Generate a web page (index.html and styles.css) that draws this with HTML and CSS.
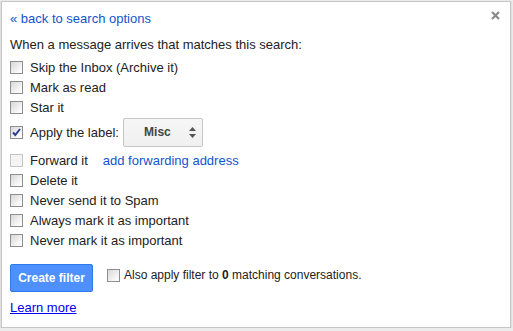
FILE: index.html
```html
<!DOCTYPE html>
<html>
<head>
<meta charset="utf-8">
<link rel="stylesheet" href="styles.css">
</head>
<body>
<div class="panel">
  <div class="head">
    <a class="back" href="#">« back to search options</a>
    <span class="close"><svg width="9" height="9" viewBox="0 0 9 9"><path d="M1 1L8 8M8 1L1 8" stroke="#8a8a8a" stroke-width="2.2" fill="none"/></svg></span>
  </div>
  <div class="intro">When a message arrives that matches this search:</div>
  <div class="opts">
    <label class="row"><span class="cb"></span>Skip the Inbox (Archive it)</label>
    <label class="row"><span class="cb"></span>Mark as read</label>
    <label class="row"><span class="cb"></span>Star it</label>
    <label class="row row-label"><span class="cb checked"><svg width="11" height="11" viewBox="0 0 11 11"><path d="M2 5.5L4.3 8L9 2" stroke="#2a3f8f" stroke-width="2" fill="none"/></svg></span>Apply the label:
      <span class="select"><span class="sel-text">Misc</span><span class="arrows"><svg width="7" height="11" viewBox="0 0 7 11"><path d="M3.5 0L7 4H0Z M3.5 11L7 7H0Z" fill="#555"/></svg></span></span>
    </label>
    <label class="row"><span class="cb disabled"></span>Forward it<a class="fwd" href="#">add forwarding address</a></label>
    <label class="row"><span class="cb"></span>Delete it</label>
    <label class="row"><span class="cb"></span>Never send it to Spam</label>
    <label class="row"><span class="cb"></span>Always mark it as important</label>
    <label class="row"><span class="cb"></span>Never mark it as important</label>
  </div>
  <div class="actions">
    <button class="create">Create filter</button>
    <label class="also"><span class="cb"></span><span>Also apply filter to <b>0</b> matching conversations.</span></label>
  </div>
  <a class="learn" href="#">Learn more</a>
</div>
</body>
</html>
```
FILE: styles.css
```css
html, body {
  margin: 0;
  padding: 0;
}
body {
  background: #ececec;
  font-family: "Liberation Sans", Arial, sans-serif;
  font-size: 13px;
  color: #222;
}
.panel {
  box-sizing: border-box;
  margin: 1px 0 0 1px;
  width: 510px;
  height: 327px;
  background: #fff;
  border: 1px solid #c6c6c6;
  box-shadow: 0 1px 2px rgba(0,0,0,0.15);
  padding: 9px 8px 0 8px;
}
.head {
  display: flex;
  justify-content: space-between;
  align-items: center;
  height: 15px;
  line-height: 15px;
}
.back {
  color: #1155cc;
  text-decoration: none;
}
.close {
  display: flex;
  margin-right: 2px;
  margin-top: -7px;
}
.intro {
  margin-top: 11px;
  height: 15px;
  line-height: 15px;
}
.opts {
  margin-top: 5px;
}
.row {
  display: flex;
  align-items: center;
  height: 20px;
  line-height: 15px;
}
.row-label {
  height: 30px;
  margin-bottom: 3px;
}
.cb {
  box-sizing: border-box;
  width: 13px;
  height: 13px;
  border: 1px solid #8e8e8e;
  background: linear-gradient(135deg, #d8d8d8, #f6f6f6 70%, #fff);
  margin-right: 7px;
  flex: none;
  display: flex;
  align-items: center;
  justify-content: center;
}
.cb.checked svg {
  display: block;
}
.cb.disabled {
  border-color: #c4c4c4;
  background: #f4f4f4;
}
.select {
  box-sizing: border-box;
  margin-left: 4px;
  width: 80px;
  height: 29px;
  border: 1px solid #c6c6c6;
  border-radius: 2px;
  background: linear-gradient(#f6f6f6, #f0f0f0);
  display: flex;
  align-items: center;
  margin-top: 1px;
}
.sel-text {
  flex: 1;
  text-align: center;
  font-weight: bold;
  font-size: 12px;
  color: #444;
  padding-left: 2px;
}
.arrows {
  display: flex;
  margin-right: 6px;
}
.fwd {
  margin-left: 15px;
  color: #1155cc;
  text-decoration: none;
}
.actions {
  margin-top: 14px;
  display: flex;
  align-items: flex-start;
}
.create {
  width: 83px;
  height: 28px;
  border: 1px solid #3079ed;
  border-radius: 2px;
  background: #4d90fe;
  color: #fff;
  font-family: "Liberation Sans", Arial, sans-serif;
  font-size: 12px;
  font-weight: bold;
  padding: 0;
}
.also {
  display: flex;
  align-items: center;
  margin-left: 14px;
  margin-top: 4px;
  line-height: 15px;
  font-size: 12px;
}
.also .cb {
  margin-right: 4px;
}
.learn {
  display: inline-block;
  margin-top: 8px;
  color: #0000ee;
  text-decoration: underline;
  line-height: 15px;
}
```
